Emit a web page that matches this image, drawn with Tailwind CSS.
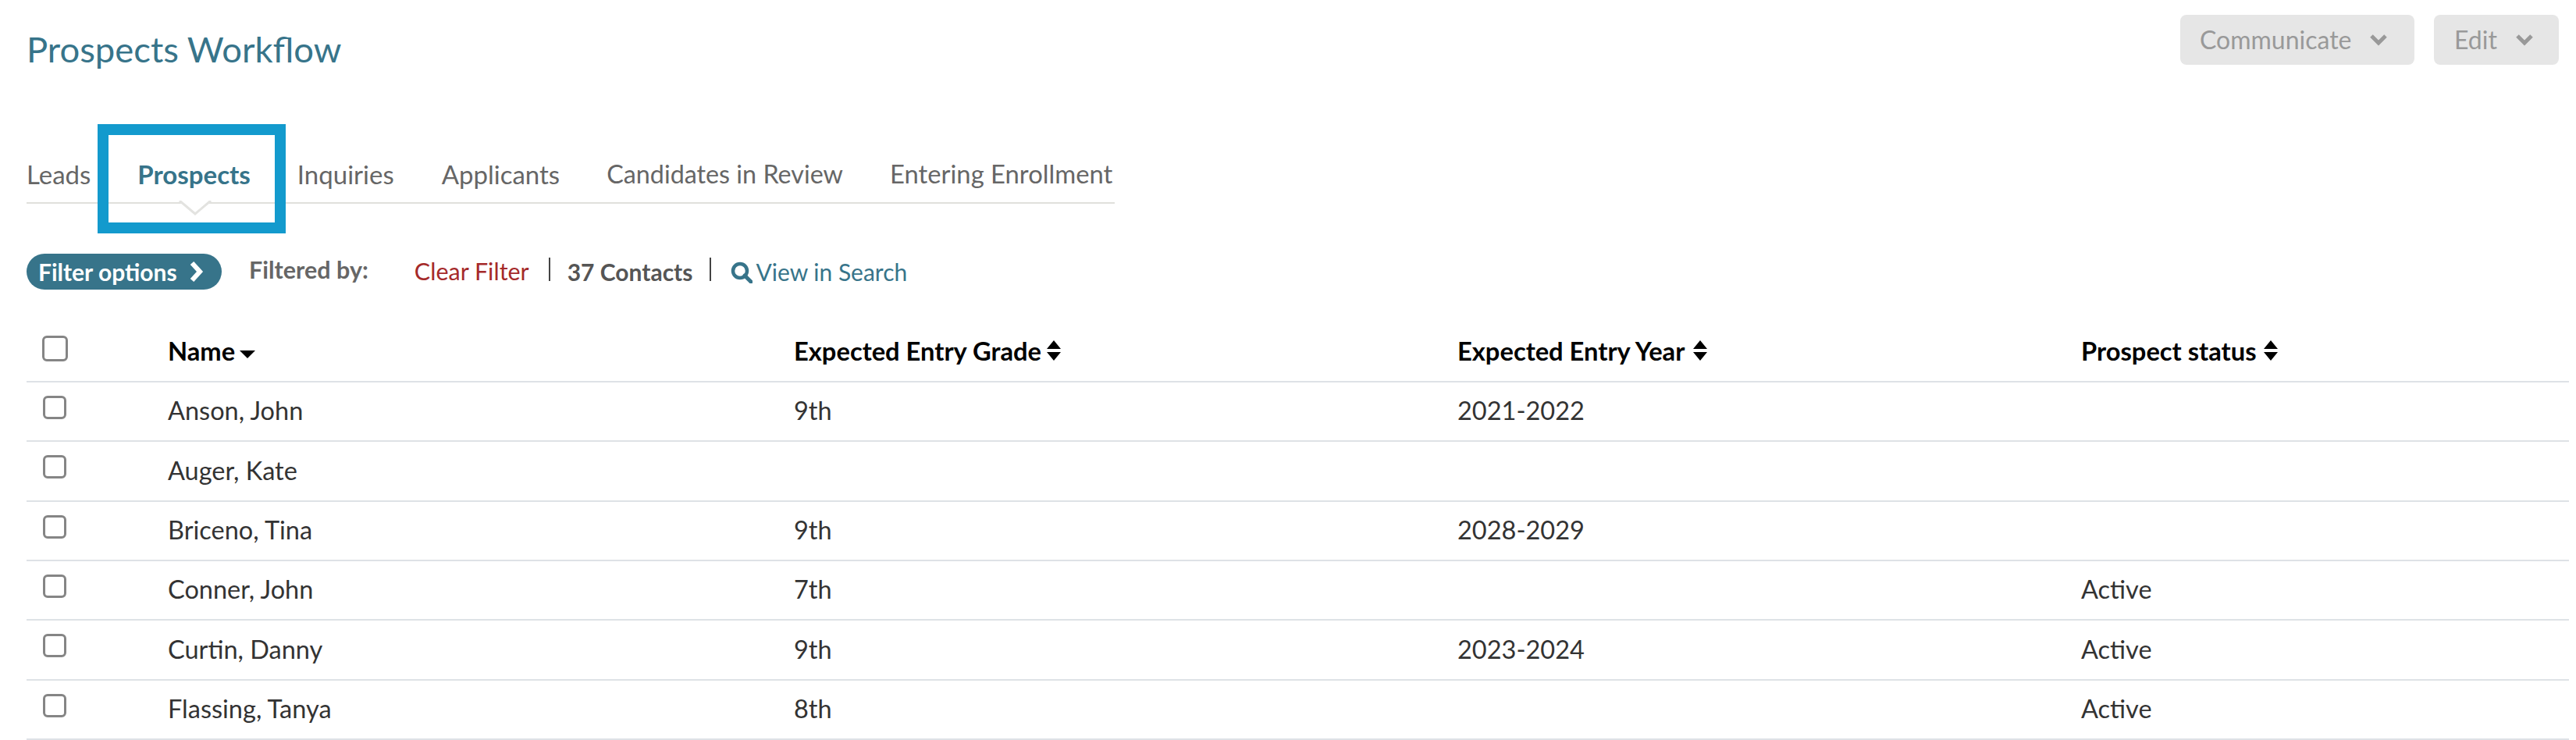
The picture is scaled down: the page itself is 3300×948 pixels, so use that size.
<!DOCTYPE html>
<html lang="en">
<head>
<meta charset="utf-8">
<title>Prospects Workflow</title>
<script src="https://cdn.jsdelivr.net/npm/@tailwindcss/browser@4"></script>
</head>
<body class="bg-white font-['Lato',sans-serif] overflow-hidden">
<div class="relative w-[3300px] h-[948px] pl-[34px] pr-[9px] overflow-hidden">

  <!-- Title + actions -->
  <div class="flex justify-between items-start h-[159px] pr-[13px]">
    <h1 class="mt-[36px] text-[45.4px] leading-[54px] font-normal text-[#37748a]">Prospects Workflow</h1>
    <div class="flex gap-[25px] mt-[19px]">
      <div class="w-[300px] h-[64px] rounded-[8px] bg-[#e6e6e6] text-[#999999] text-[32px] flex items-center pl-[25px] gap-[23px]">Communicate
        <svg width="24" height="16" viewBox="0 0 24 16" fill="none"><path d="M3 3l9 9 9-9" stroke="#999999" stroke-width="5"/></svg>
      </div>
      <div class="w-[160px] h-[64px] rounded-[8px] bg-[#e6e6e6] text-[#999999] text-[32px] flex items-center pl-[26px] gap-[23px]">Edit
        <svg width="24" height="16" viewBox="0 0 24 16" fill="none"><path d="M3 3l9 9 9-9" stroke="#999999" stroke-width="5"/></svg>
      </div>
    </div>
  </div>

  <!-- Tabs -->
  <div class="relative flex gap-[60px] w-[1394px] h-[102px] pt-[43px] border-b-2 border-[#e0e0dc] text-[33px] leading-[42px] text-[#666666] whitespace-nowrap">
    <span>Leads</span>
    <span class="font-bold text-[#37748a]">Prospects</span>
    <span>Inquiries</span>
    <span class="ml-[1px]">Applicants</span>
    <span class="text-[32.3px]">Candidates in Review</span>
    <span class="text-[32.8px]">Entering Enrollment</span>
    <svg class="absolute left-[193px] top-[98px]" width="46" height="20" viewBox="0 0 46 20" fill="none"><path d="M3 0l20 17L43 0" fill="#fff" stroke="#e3e3e0" stroke-width="3"/></svg>
  </div>

  <!-- Filter row -->
  <div class="flex items-center h-[46px] mt-[65px] text-[30.5px] whitespace-nowrap">
    <div class="w-[250px] h-[46px] rounded-full bg-[#37748a] text-white font-bold text-[30px] flex items-center pl-[15px] gap-[15px] shrink-0 -mt-[2px]">Filter options
      <svg width="20" height="28" viewBox="0 0 20 28" fill="none"><path d="M4 3l10 11L4 25" stroke="#fff" stroke-width="6"/></svg>
    </div>
    <span class="ml-[35px] font-bold text-[#666666] -mt-[6px]">Filtered by:</span>
    <span class="ml-[59px] text-[#a52a2a] -mt-[2px]">Clear Filter</span>
    <span class="ml-[25px] w-[2px] h-[30px] bg-[#444444] -mt-[8px]"></span>
    <span class="ml-[22px] font-bold text-[30px] text-[#555555] -mt-[2px]">37 Contacts</span>
    <span class="ml-[22px] w-[2px] h-[30px] bg-[#444444] -mt-[8px]"></span>
    <svg class="ml-[25px]" width="28" height="28" viewBox="0 0 28 28" fill="none"><circle cx="12" cy="12" r="9" stroke="#37748a" stroke-width="4.5"/><path d="M18 18l8 8" stroke="#37748a" stroke-width="5" stroke-linecap="round"/></svg>
    <span class="ml-[4px] text-[30px] text-[#37748a] -mt-[2px]">View in Search</span>
  </div>

  <!-- Table -->
  <div class="mt-[39px] text-[32.5px] text-[#333333]">
    <div class="grid grid-cols-[181px_802px_850px_799px_1fr] items-center h-[79px] border-b-2 border-[#dee2e6] text-black text-[32.7px] font-bold">
      <span class="block w-[33px] h-[33px] ml-[20px] mb-[6px] rounded-[6px] border-[3px] border-[#858585]"></span>
      <span class="flex items-center gap-[6px]">Name <svg class="mt-[10px]" width="20" height="10" viewBox="0 0 20 10"><path d="M0 0h20L10 10z" fill="#000"/></svg></span>
      <span class="flex items-center gap-[6px]">Expected Entry Grade <svg width="20" height="26" viewBox="0 0 20 26"><path d="M10 0l9 11H1zM10 26l9-11H1z" fill="#000"/></svg></span>
      <span class="flex items-center gap-[10px]">Expected Entry Year <svg width="20" height="26" viewBox="0 0 20 26"><path d="M10 0l9 11H1zM10 26l9-11H1z" fill="#000"/></svg></span>
      <span class="flex items-center gap-[8px]">Prospect status <svg width="20" height="26" viewBox="0 0 20 26"><path d="M10 0l9 11H1zM10 26l9-11H1z" fill="#000"/></svg></span>
    </div>
    <div class="grid grid-cols-[181px_802px_850px_799px_1fr] items-center h-[76.33px] border-b-2 border-[#dee2e6] pb-[1px]">
      <span class="block w-[30px] h-[30px] ml-[21px] mb-[9px] rounded-[6px] border-[3px] border-[#858585]"></span>
      <span>Anson, John</span><span>9th</span><span>2021-2022</span><span></span>
    </div>
    <div class="grid grid-cols-[181px_802px_850px_799px_1fr] items-center h-[76.33px] border-b-2 border-[#dee2e6] pb-[1px]">
      <span class="block w-[30px] h-[30px] ml-[21px] mb-[9px] rounded-[6px] border-[3px] border-[#858585]"></span>
      <span>Auger, Kate</span><span></span><span></span><span></span>
    </div>
    <div class="grid grid-cols-[181px_802px_850px_799px_1fr] items-center h-[76.33px] border-b-2 border-[#dee2e6] pb-[1px]">
      <span class="block w-[30px] h-[30px] ml-[21px] mb-[9px] rounded-[6px] border-[3px] border-[#858585]"></span>
      <span>Briceno, Tina</span><span>9th</span><span>2028-2029</span><span></span>
    </div>
    <div class="grid grid-cols-[181px_802px_850px_799px_1fr] items-center h-[76.33px] border-b-2 border-[#dee2e6] pb-[1px]">
      <span class="block w-[30px] h-[30px] ml-[21px] mb-[9px] rounded-[6px] border-[3px] border-[#858585]"></span>
      <span>Conner, John</span><span>7th</span><span></span><span>Active</span>
    </div>
    <div class="grid grid-cols-[181px_802px_850px_799px_1fr] items-center h-[76.33px] border-b-2 border-[#dee2e6] pb-[1px]">
      <span class="block w-[30px] h-[30px] ml-[21px] mb-[9px] rounded-[6px] border-[3px] border-[#858585]"></span>
      <span>Curtin, Danny</span><span>9th</span><span>2023-2024</span><span>Active</span>
    </div>
    <div class="grid grid-cols-[181px_802px_850px_799px_1fr] items-center h-[76.33px] border-b-2 border-[#dee2e6] pb-[1px]">
      <span class="block w-[30px] h-[30px] ml-[21px] mb-[9px] rounded-[6px] border-[3px] border-[#858585]"></span>
      <span>Flassing, Tanya</span><span>8th</span><span></span><span>Active</span>
    </div>
  </div>

  <!-- Annotation highlight -->
  <div class="absolute left-[125px] top-[159px] w-[241px] h-[140px] border-[14px] border-[#139acd]"></div>
</div>
</body>
</html>
